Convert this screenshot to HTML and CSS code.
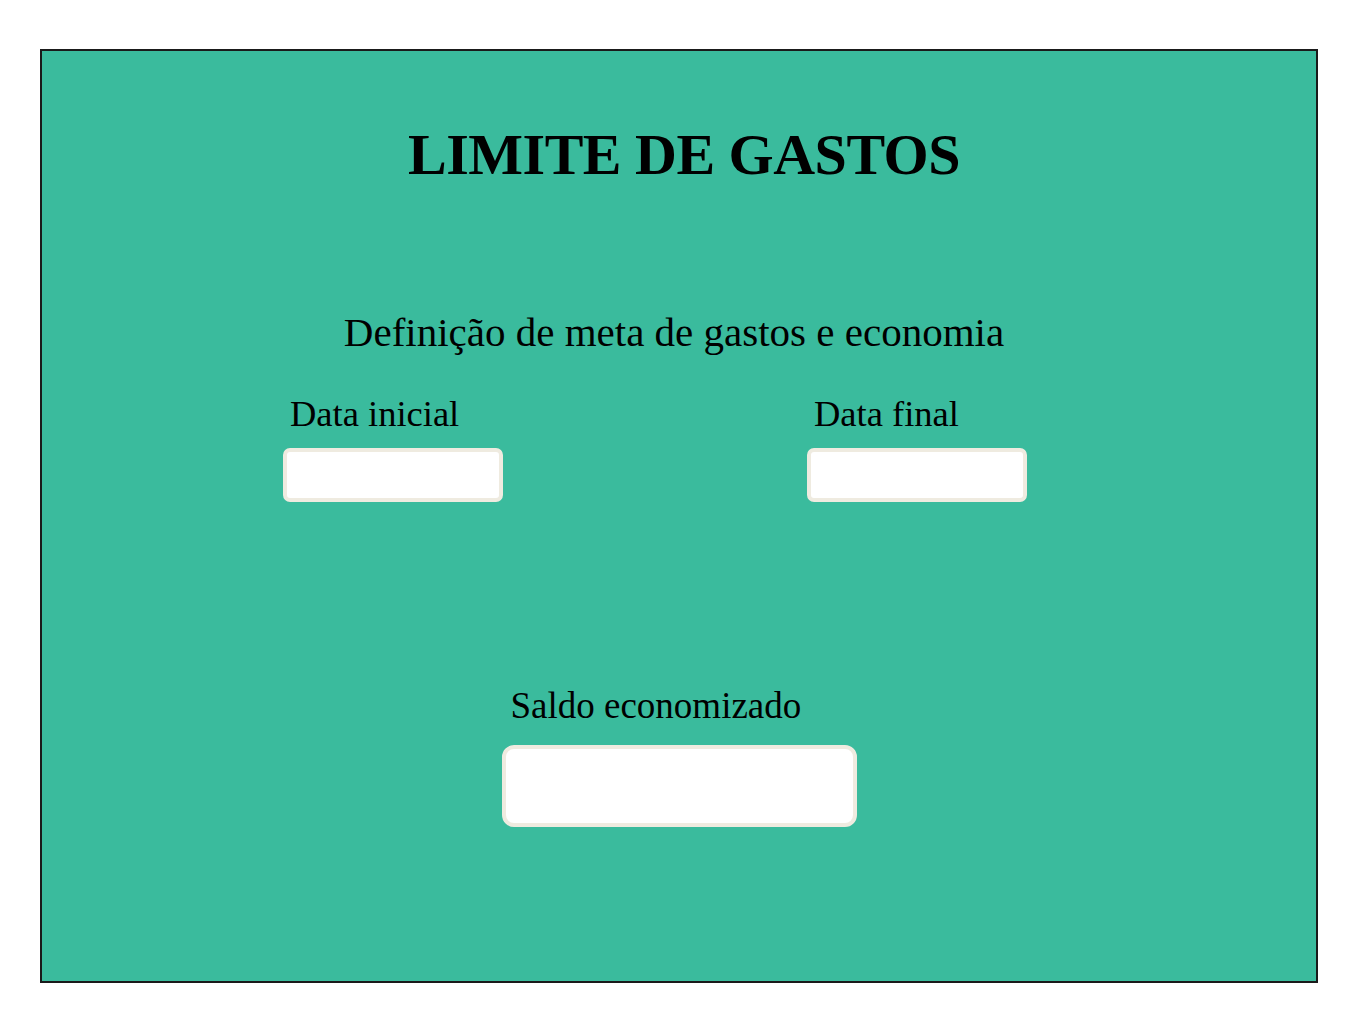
FILE: index.html
```html
<!DOCTYPE html>
<html lang="pt-BR">
<head>
    <meta charset="UTF-8">
    <meta name="viewport" content="width=device-width, initial-scale=1.0">
    <title>Limite de Gastos</title>
    <link rel="stylesheet" href="styles.css">
</head>
<body>

    <div class="container">
        <h1>LIMITE DE GASTOS</h1>
        <h2>Definição de meta de gastos e economia</h2>

        <div class="datas">
            <div class="campo">
                <label for="data_inicial">Data inicial</label>
                <input type="text" id="data_inicial" class="input-data">
            </div>
            <div class="campo">
                <label for="data_final">Data final</label>
                <input type="text" id="data_final" class="input-data">
            </div>
        </div>

        <div class="saldo">
            <label for="saldo">Saldo economizado</label>
            <input type="text" id="saldo" class="input-saldo">
        </div>
    </div>

</body>
</html>
```

FILE: styles.css
```css
body {
    font-family: "Liberation Serif", "Times New Roman", serif;
    background-color: #fff;
    margin: 0;
    padding: 49px 0 0 40px;
}
.container {
    background-color: #3abb9d;
    border: 2px solid #1a1a1a;
    width: 1274px;
    height: 930px;
    box-sizing: content-box;
    display: flex;
    flex-direction: column;
    align-items: center;
}
h1 {
    font-size: 58px;
    font-weight: bold;
    margin: 69px 0 0 10px;
    line-height: 1.2;
    letter-spacing: -0.5px;
}
h2 {
    font-size: 41px;
    font-weight: normal;
    margin: 118px 0 0 -10px;
    line-height: 1.2;
}
.datas {
    display: flex;
    gap: 304px;
    margin: 35px 0 0 -48px;
}
.campo {
    display: flex;
    flex-direction: column;
}
label {
    font-size: 36.5px;
    padding-left: 7px;
    line-height: 1.2;
    margin-bottom: 12px;
}
input {
    background-color: #fff;
    border: 4px solid #efebe0;
    border-radius: 7px;
    box-sizing: border-box;
    outline: none;
}
.input-data {
    width: 220px;
    height: 54px;
}
.saldo {
    display: flex;
    flex-direction: column;
    margin-top: 182px;
}
.saldo label {
    font-size: 37px;
    padding-left: 9px;
    margin-bottom: 17px;
}
.input-saldo {
    width: 355px;
    height: 82px;
    border-radius: 12px;
}
```
